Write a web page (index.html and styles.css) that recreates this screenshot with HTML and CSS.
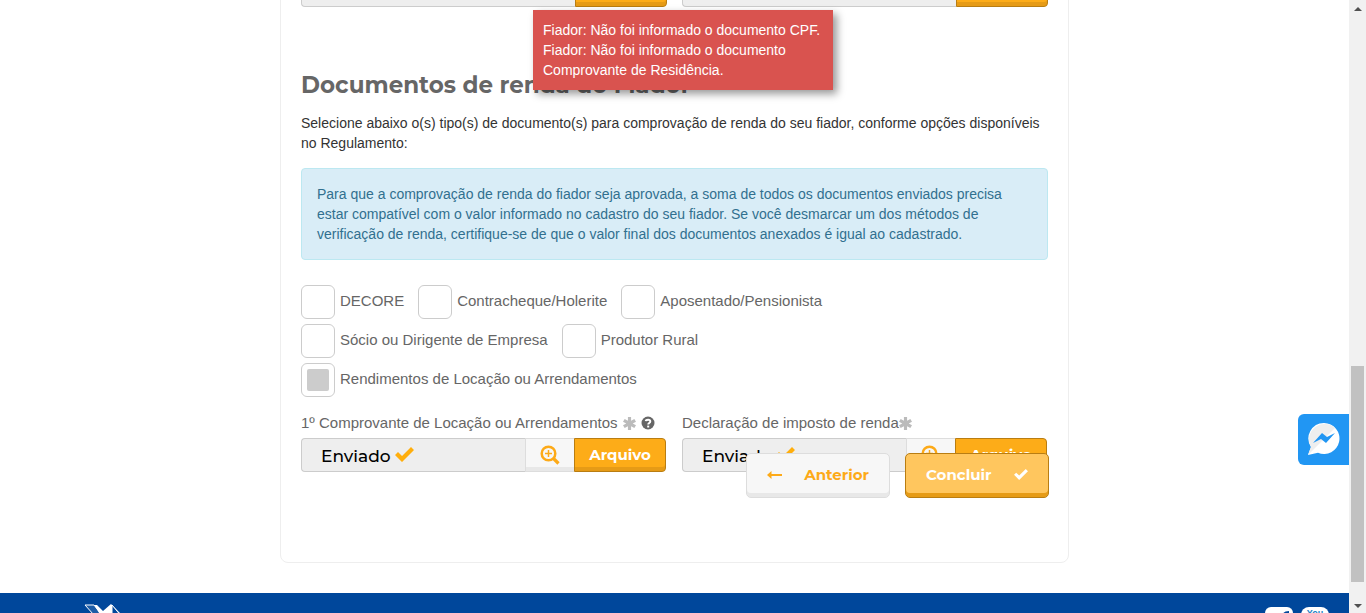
FILE: index.html
```html
<!DOCTYPE html>
<html lang="pt-BR">
<head>
<meta charset="utf-8">
<meta name="viewport" content="width=device-width, initial-scale=1">
<title>Documentos do Fiador</title>
<link rel="stylesheet" href="styles.css">
</head>
<body>
<svg class="sprite" aria-hidden="true">
  <symbol id="check" viewBox="0 0 19 15"><path d="M0 8 3 5 7 9 16 0 19 3 7 15Z"/></symbol>
  <symbol id="asterisk" viewBox="0 0 14 14"><path d="M5.3 0h3.4v4.1l3.5-2 1.8 2.9L10.500 7l3.500 2-1.800 2.900-3.500-2V14H5.300V9.900l-3.500 2L0 9l3.500-2L0 5l1.800-2.900 3.500 2Z"/></symbol>
  <symbol id="zoom-in" viewBox="0 0 20 20"><g fill="none" stroke="currentColor"><circle cx="8.500" cy="8.500" r="6.800" stroke-width="2.500"/><path d="m13.500 13.500 5 5" stroke-width="3.200"/><path d="M8.500 5v7M5 8.500h7" stroke-width="1.500"/></g></symbol>
  <symbol id="help" viewBox="0 0 14 14"><circle cx="7" cy="7" r="6.500"/><path d="M4.700 5.200C5 3.300 9.300 3.100 9.300 5.400 9.300 7 7.200 6.900 7.200 8.500" fill="none" stroke="#fff" stroke-width="1.900"/><path d="M6.200 9.600h2v1.900h-2z" fill="#fff"/></symbol>
  <symbol id="arrow-left" viewBox="0 0 15 8"><path d="M4.500 0v3H15v2H4.500v3L0 4Z"/></symbol>
</svg>
<div class="page">
  <main class="card">
    <div class="columns">
      <div class="file-group"><div class="caption"></div><button class="file-btn" type="button" aria-label="Arquivo"></button></div>
      <div class="file-group"><div class="caption"></div><button class="file-btn" type="button" aria-label="Arquivo"></button></div>
    </div>

    <h2 class="title">Documentos de renda do Fiador</h2>
    <p class="intro">Selecione abaixo o(s) tipo(s) de documento(s) para comprovação de renda do seu fiador, conforme opções disponíveis no Regulamento:</p>
    <p class="info">Para que a comprovação de renda do fiador seja aprovada, a soma de todos os documentos enviados precisa estar compatível com o valor informado no cadastro do seu fiador. Se você desmarcar um dos métodos de verificação de renda, certifique-se de que o valor final dos documentos anexados é igual ao cadastrado.</p>

    <div class="options">
      <label class="option"><input class="box" type="checkbox"><span>DECORE</span></label>
      <label class="option"><input class="box" type="checkbox"><span>Contracheque/Holerite</span></label>
      <label class="option"><input class="box" type="checkbox"><span>Aposentado/Pensionista</span></label>
      <span class="break"></span>
      <label class="option"><input class="box" type="checkbox"><span>Sócio ou Dirigente de Empresa</span></label>
      <label class="option"><input class="box" type="checkbox"><span>Produtor Rural</span></label>
      <span class="break"></span>
      <label class="option"><input class="box" type="checkbox" checked><span>Rendimentos de Locação ou Arrendamentos</span></label>
    </div>

    <div class="columns">
      <section class="field">
        <div class="field-label">1º Comprovante de Locação ou Arrendamentos<svg class="mark spaced"><use href="#asterisk"/></svg><svg class="help spaced"><use href="#help"/></svg></div>
        <div class="file-group">
          <div class="caption">Enviado<svg class="sent"><use href="#check"/></svg></div>
          <button class="zoom-btn" type="button" aria-label="Visualizar"><svg class="lens"><use href="#zoom-in"/></svg></button>
          <button class="file-btn" type="button">Arquivo</button>
        </div>
      </section>
      <section class="field">
        <div class="field-label">Declaração de imposto de renda<svg class="mark"><use href="#asterisk"/></svg></div>
        <div class="file-group">
          <div class="caption">Enviado<svg class="sent"><use href="#check"/></svg></div>
          <button class="zoom-btn" type="button" aria-label="Visualizar"><svg class="lens"><use href="#zoom-in"/></svg></button>
          <button class="file-btn" type="button">Arquivo</button>
        </div>
      </section>
    </div>

    <div class="actions">
      <button class="action back" type="button"><svg class="arrow"><use href="#arrow-left"/></svg>Anterior</button>
      <button class="action finish" type="button">Concluir<svg class="done"><use href="#check"/></svg></button>
    </div>
  </main>

  <footer class="footer">
    <svg class="brand" viewBox="0 0 40 30"><path d="M1 2h9l16 20v8Z" fill="#1d5ca6" stroke="#fff"/><path d="M10 2h3l6 6 8-7 14 14v15H28Z" fill="#fff"/><path d="M28 2v12l10 0Z" fill="#00479b" stroke="#fff"/></svg>
    <div class="social">
      <a href="#" aria-label="Facebook"><svg viewBox="0 0 28 28"><rect width="28" height="28" rx="6" fill="#fff"/><path d="M17 28V10q0-6 7-6v4q-3 0-3 3v17Z" fill="#00479b"/></svg></a>
      <a class="youtube" href="#">You</a>
    </div>
  </footer>

  <div class="toast" role="alert">Fiador: Não foi informado o documento CPF.<br>Fiador: Não foi informado o documento Comprovante de Residência.</div>
  <a class="messenger" href="#" aria-label="Messenger"><svg viewBox="0 0 32 33"><path d="M16 0a15.500 15.500 0 1 1-6 29.800L0 32 3 24A15.500 15.500 0 0 1 16 0Z" fill="#fff"/><path d="M0 32 3 24A15.500 15.500 0 0 1 27 5Z" fill="#eee"/><path d="m5 20 9-10 5 4 8-4-9 10-5-4Z" fill="#2196f3"/></svg></a>
</div>
<div class="scrollbar" aria-hidden="true"><i class="up"></i><i class="track"><i class="thumb"></i></i><i class="down"></i></div>
</body>
</html>
```
FILE: styles.css
```css
* { box-sizing: border-box; }
body {
  margin: 0;
  display: flex;
  height: 100vh;
  overflow: hidden;
  background: #fff;
  color: #333;
  font: 14px/20px "Liberation Sans", Arial, sans-serif;
}
svg { fill: currentColor; flex: none; }
button { font-family: Montserrat, Inter, sans-serif; cursor: pointer; }
.sprite { position: absolute; width: 0; height: 0; }
.page { position: relative; flex: 1; overflow: hidden; }
.card {
  position: relative;
  width: 100%;
  max-width: 789px;
  margin: -48px auto 30px;
  padding: 20px 20px 90px;
  border: 1px solid #eee;
  border-radius: 8px;
}
.columns { display: grid; grid-template-columns: 1fr 1fr; gap: 15px; }
.field { padding-right: 1px; }
.file-group { display: flex; height: 34px; }
.caption {
  flex: 1;
  display: flex;
  align-items: center;
  gap: 4px;
  padding: 2px 0 0 19px;
  border: 1px solid #ccc;
  border-right: 0;
  border-radius: 4px 0 0 4px;
  background: #eee;
  color: #000;
  font: 500 17px/30px Montserrat, Inter, sans-serif;
}
.sent { width: 19px; height: 15px; margin-top: -3px; color: #ffae0c; }
.zoom-btn {
  width: 49px;
  padding: 0;
  border: 1px solid #ddd;
  border-right: 0;
  background: #f7f7f7;
  box-shadow: inset 0 -4px #e8e8e8;
  color: #fdaa18;
}
.lens { display: block; width: 20px; height: 20px; margin: 0 auto; }
.file-btn {
  width: 92px;
  padding: 0 0 2px;
  border: 1px solid #b97d12;
  border-radius: 0 4px 4px 0;
  background: #fdac18;
  box-shadow: inset 0 -4px #e69b16;
  color: #fff;
  font-size: 15px;
  font-weight: 700;
}
.title { margin: 62px 0 12px; color: #666; font: 700 23px/32px Montserrat, Inter, sans-serif; }
.intro { margin: 0 0 15px; }
.info {
  margin: 0 0 25px;
  padding: 15px;
  border: 1px solid #bce8f1;
  border-radius: 4px;
  background: #d9edf7;
  color: #31708f;
}
.options { display: flex; flex-wrap: wrap; column-gap: 14px; margin-bottom: 11px; color: #666; font-size: 15px; }
.break { width: 100%; }
.option { display: flex; gap: 5px; margin-bottom: 5px; line-height: 32px; }
.box { appearance: none; width: 34px; height: 34px; margin: 0; border: 1px solid #ccc; border-radius: 6px; background: #fff; }
.box:checked { display: grid; place-items: center; }
.box:checked::before { content: ""; width: 22px; height: 22px; border-radius: 2px; background: #ccc; }
.field-label { display: flex; align-items: center; margin-bottom: 5px; color: #666; font-size: 15px; }
.mark { width: 13px; height: 13px; color: #bbb; }
.help { width: 14px; height: 14px; }
.spaced { margin-left: 5px; }
.actions { position: absolute; right: 19px; bottom: 64px; display: flex; gap: 15px; }
.action {
  display: flex;
  align-items: center;
  justify-content: space-between;
  width: 144px;
  height: 45px;
  padding: 0 20px 2px;
  border: 1px solid #ddd;
  border-radius: 5px;
  font-size: 15px;
  font-weight: 700;
}
.back { background: #f7f7f7; box-shadow: inset 0 -4px #e8e8e8; color: #fdaa18; }
.finish { border-color: #b97d12; background: #ffc65e; box-shadow: inset 0 -4px #e69b16; color: #fff; }
.arrow { width: 15px; height: 8px; }
.done { width: 14px; height: 11px; }
.footer {
  display: flex;
  justify-content: space-between;
  height: 120px;
  padding: 10px 20px 0 84px;
  background: #00479b;
}
.brand { width: 40px; height: 30px; }
.social { display: flex; gap: 8px; padding-top: 4px; }
.social a, .social svg { display: block; width: 28px; height: 28px; }
.social .youtube { border-radius: 8px; background: #fff; color: #1d7fc4; font: 700 9px/12px "Liberation Sans", Arial, sans-serif; text-align: center; text-decoration: none; }
.toast {
  position: absolute;
  top: 10px;
  left: 533px;
  width: 300px;
  padding: 10px;
  background: #d9534f;
  box-shadow: 4px 4px 8px rgba(0, 0, 0, .4);
  color: #fff;
}
.messenger {
  position: absolute;
  right: 0;
  top: 414px;
  display: grid;
  place-items: center;
  width: 51px;
  height: 51px;
  border-radius: 6px 0 0 6px;
  background: #2196f3;
}
.messenger svg { width: 32px; height: 33px; }
.scrollbar { display: flex; flex-direction: column; align-items: center; width: 17px; padding: 7px 0 5px; background: #f1f1f1; }
.up, .down { border: 4px solid transparent; }
.up { border-top: 0; border-bottom-color: #505050; }
.down { border-bottom: 0; border-top-color: #505050; }
.track { flex: 1; display: flex; flex-direction: column; justify-content: flex-end; padding-bottom: 22px; }
.thumb { width: 13px; height: 216px; background: #c1c1c1; }
```
